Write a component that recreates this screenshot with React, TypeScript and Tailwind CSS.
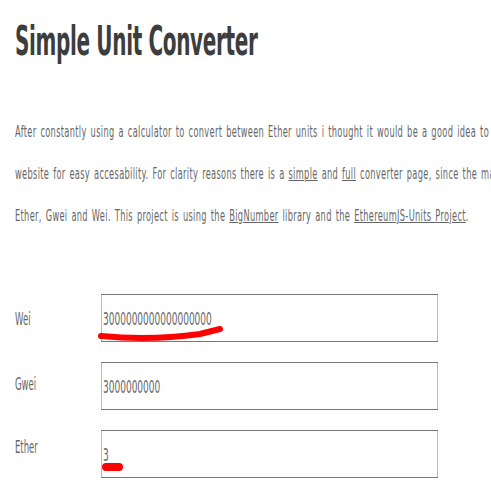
import React from "react";

const rows = [
  { label: "Wei", value: "3000000000000000000", labelTop: "mt-[15px]" },
  { label: "Gwei", value: "3000000000", labelTop: "mt-[12px]" },
  { label: "Ether", value: "3", labelTop: "mt-[7px]" },
];

export default function App() {
  return (
    <div className="relative w-[491px] h-[491px] overflow-hidden bg-white">
      <div className="w-[982px] origin-top-left scale-x-50 pl-[30px] font-['DejaVu_Sans',Verdana,sans-serif]">
        <h1 className="pt-[21px] text-[40px] leading-[40px] font-bold tracking-[-0.7px] text-[#3d3d3d] whitespace-nowrap">
          Simple Unit Converter
        </h1>
        <p className="mt-[50px] text-[16.5px] leading-[42px] tracking-[0.65px] [word-spacing:2px] text-[#666] whitespace-nowrap">
          After constantly using a calculator to convert between Ether units i thought it would be a good idea to implement them on a
          <br />
          website for easy accesability. For clarity reasons there is a <a className="underline">simple</a> and{" "}
          <a className="underline">full</a> converter page, since the majority of users only need
          <br />
          Ether, Gwei and Wei. This project is using the <a className="underline">BigNumber</a> library and the{" "}
          <a className="underline">EthereumJS-Units Project</a>.
        </p>
        <div className="mt-[57px] flex flex-col gap-[20px]">
          {rows.map((r) => (
            <div key={r.label} className="flex items-start">
              <div className={`w-[172px] ${r.labelTop} text-[17px] leading-[20px] text-[#666]`}>{r.label}</div>
              <input
                readOnly
                value={r.value}
                className="w-[674px] h-[48px] border border-[#777] bg-white pl-[3px] text-[18px] text-[#666] font-['DejaVu_Sans',Verdana,sans-serif] outline-none"
              />
            </div>
          ))}
        </div>
      </div>
      <svg className="absolute left-0 top-0 pointer-events-none" width="491" height="491" viewBox="0 0 491 491">
        <path d="M101 336 Q 150 341 200 334 L 220 329" stroke="#ff0000" strokeWidth="6" strokeLinecap="round" fill="none" />
        <path d="M106 467 L 119 467" stroke="#ff0000" strokeWidth="8" strokeLinecap="round" fill="none" />
      </svg>
    </div>
  );
}
